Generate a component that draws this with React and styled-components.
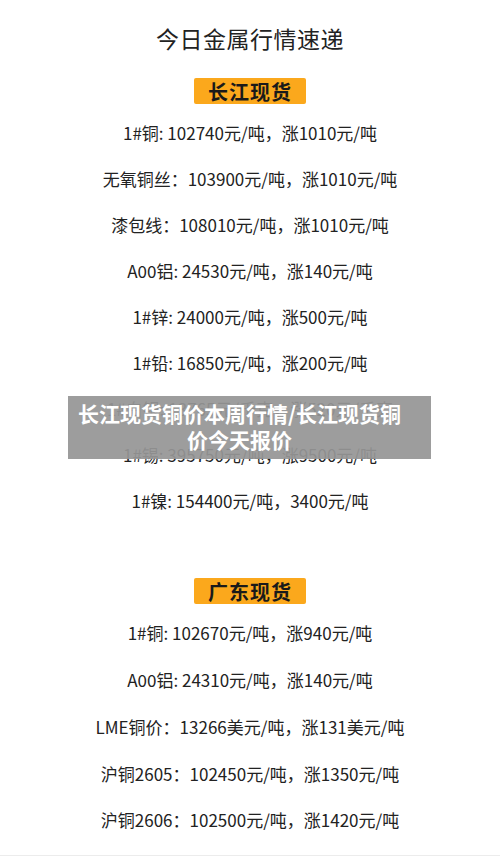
import React from 'react'
import styled, { createGlobalStyle } from 'styled-components'

const GlobalStyle = createGlobalStyle`
  body {
    margin: 0;
    background: #ffffff;
    font-family: "Noto Sans CJK SC", "Noto Sans", sans-serif;
  }
`;

const Page = styled.div`
  position: relative;
  width: 500px;
  height: 856px;
  display: flex;
  flex-direction: column;
  align-items: center;
  background: #fff;
  border-bottom: 1px solid #ececec;
  box-sizing: border-box;
  overflow: hidden;
`;

const Title = styled.div`
  margin-top: 22px;
  font-size: 23px;
  line-height: 32px;
  color: #222;
  letter-spacing: 0.5px;
`;

const Badge = styled.div`
  margin-top: ${p => p.top}px;
  width: 112px;
  height: 26px;
  display: flex;
  align-items: center;
  justify-content: center;
  background: #fba81c;
  border-radius: 2px;
  font-size: 20px;
  font-weight: 700;
  color: #1a1a1a;
  letter-spacing: 1px;
`;

const List = styled.div`
  margin-top: ${p => p.top}px;
  display: flex;
  flex-direction: column;
  align-items: center;
`;

const Row = styled.div`
  height: ${p => p.h}px;
  display: flex;
  align-items: center;
  font-size: 17px;
  color: #222;
  white-space: pre;
`;

const Overlay = styled.div`
  position: absolute;
  left: 68px;
  top: 396px;
  width: 363px;
  height: 63px;
  display: flex;
  align-items: center;
  justify-content: center;
  text-align: center;
  background: rgba(150, 150, 150, 0.93);
  color: #fff;
  font-size: 21px;
  font-weight: 700;
  line-height: 26px;
  padding: 0 28px 4px 8px;
  box-sizing: border-box;
`;

const changjiang = [
  '1#铜: 102740元/吨，涨1010元/吨',
  '无氧铜丝：103900元/吨，涨1010元/吨',
  '漆包线：108010元/吨，涨1010元/吨',
  'A00铝: 24530元/吨，涨140元/吨',
  '1#锌: 24000元/吨，涨500元/吨',
  '1#铅: 16850元/吨，涨200元/吨',
  '1#白银: 13765元/千克，涨520元/千克',
  '1#锡: 395750元/吨，涨9500元/吨',
  '1#镍: 154400元/吨，3400元/吨',
];

const guangdong = [
  '1#铜: 102670元/吨，涨940元/吨',
  'A00铝: 24310元/吨，涨140元/吨',
  'LME铜价：13266美元/吨，涨131美元/吨',
  '沪铜2605：102450元/吨，涨1350元/吨',
  '沪铜2606：102500元/吨，涨1420元/吨',
];

export default function App() {
  return (
    <>
      <GlobalStyle />
      <Page>
        <Title>今日金属行情速递</Title>
        <Badge top={24}>长江现货</Badge>
        <List top={5}>
          {changjiang.map((t, i) => <Row key={i} h={46}>{t}</Row>)}
        </List>
        <Badge top={55}>广东现货</Badge>
        <List top={5.5}>
          {guangdong.map((t, i) => <Row key={i} h={46.75}>{t}</Row>)}
        </List>
        <Overlay>长江现货铜价本周行情/长江现货铜<br />价今天报价</Overlay>
      </Page>
    </>
  );
}
